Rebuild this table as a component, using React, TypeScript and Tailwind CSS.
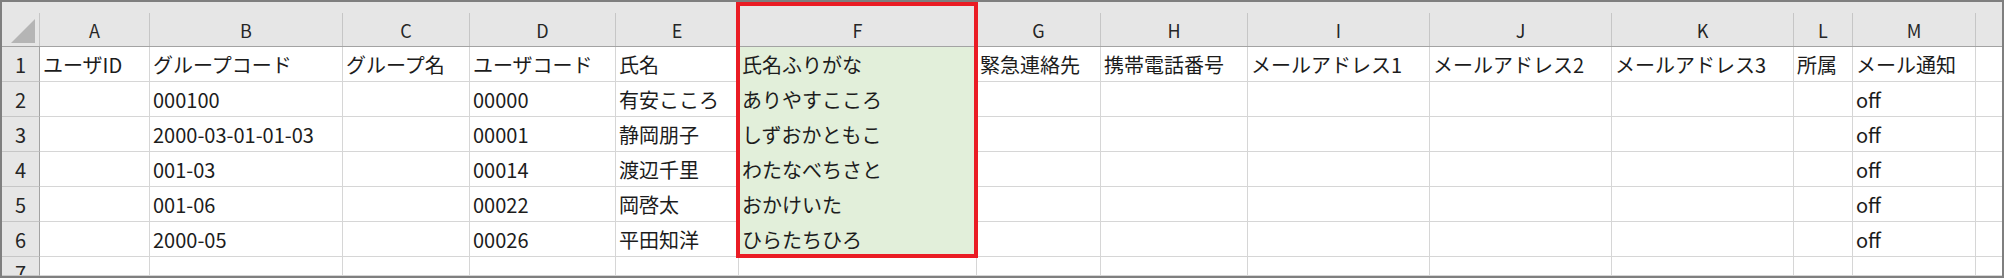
import React from "react";

const letters = ["A", "B", "C", "D", "E", "F", "G", "H", "I", "J", "K", "L", "M", ""];

const rows: string[][] = [
  ["ユーザID", "グループコード", "グループ名", "ユーザコード", "氏名", "氏名ふりがな", "緊急連絡先", "携帯電話番号", "メールアドレス1", "メールアドレス2", "メールアドレス3", "所属", "メール通知", ""],
  ["", "000100", "", "00000", "有安こころ", "ありやすこころ", "", "", "", "", "", "", "off", ""],
  ["", "2000-03-01-01-03", "", "00001", "静岡朋子", "しずおかともこ", "", "", "", "", "", "", "off", ""],
  ["", "001-03", "", "00014", "渡辺千里", "わたなべちさと", "", "", "", "", "", "", "off", ""],
  ["", "001-06", "", "00022", "岡啓太", "おかけいた", "", "", "", "", "", "", "off", ""],
  ["", "2000-05", "", "00026", "平田知洋", "ひらたちひろ", "", "", "", "", "", "", "off", ""],
  ["", "", "", "", "", "", "", "", "", "", "", "", "", ""],
];

export default function App() {
  return (
    <div className="w-[2004px] h-[278px] bg-white font-['Noto_Sans_CJK_JP',sans-serif] text-[#1c1c1c]">
      <div className="relative w-[2004px] h-[278px] border-2 border-[#7f7f7f] overflow-hidden">
        <div className="grid grid-cols-[38px_110px_193px_127px_146px_123px_238px_124px_147px_182px_182px_182px_59px_123px_26px] grid-rows-[45px_35px_35px_35px_35px_35px_35px_19px]">
          {/* corner */}
          <div className="bg-[#e6e6e6] border-b border-[#a3a3a3] pt-[11px]">
            <div className="h-full border-r border-[#c6c6c6] flex items-end justify-end pr-[4px] pb-[3px]">
              <svg width="24" height="24" viewBox="0 0 24 24">
                <polygon points="24,0 24,24 0,24" fill="#b5b5b5" />
              </svg>
            </div>
          </div>
          {letters.map((l, i) => (
            <div key={"h" + i} className="bg-[#e6e6e6] border-b border-[#a3a3a3] pt-[11px]">
              <div
                className={
                  "h-full flex items-center justify-center text-[18px] leading-none text-[#262626] " +
                  (i < letters.length - 1 ? "border-r border-[#c6c6c6]" : "")
                }
              >
                {l}
              </div>
            </div>
          ))}
          {rows.map((r, ri) => (
            <React.Fragment key={"r" + ri}>
              <div className="bg-[#e6e6e6] border-r border-r-[#a3a3a3] border-b border-b-[#c6c6c6] flex items-center justify-center text-[20px] leading-none text-[#262626] overflow-hidden">
                <span className={ri === 6 ? "pt-[14px]" : "pt-[1px]"}>{ri + 1}</span>
              </div>
              {r.map((c, ci) => {
                const green = ci === 5 && ri < 6;
                return (
                  <div
                    key={"c" + ri + "-" + ci}
                    className={
                      "flex items-center pl-[3px] pt-[2px] overflow-hidden whitespace-nowrap text-[20px] leading-none border-b " +
                      (ci < r.length - 1 ? "border-r " : "") +
                      (green ? "bg-[#e2efda] border-[#e2efda]" : "border-[#d6d6d6]")
                    }
                  >
                    {c}
                  </div>
                );
              })}
            </React.Fragment>
          ))}
        </div>
        <div className="absolute left-[734px] top-0 w-[242px] h-[256px] border-4 border-[#ea1c24] pointer-events-none" />
      </div>
    </div>
  );
}
